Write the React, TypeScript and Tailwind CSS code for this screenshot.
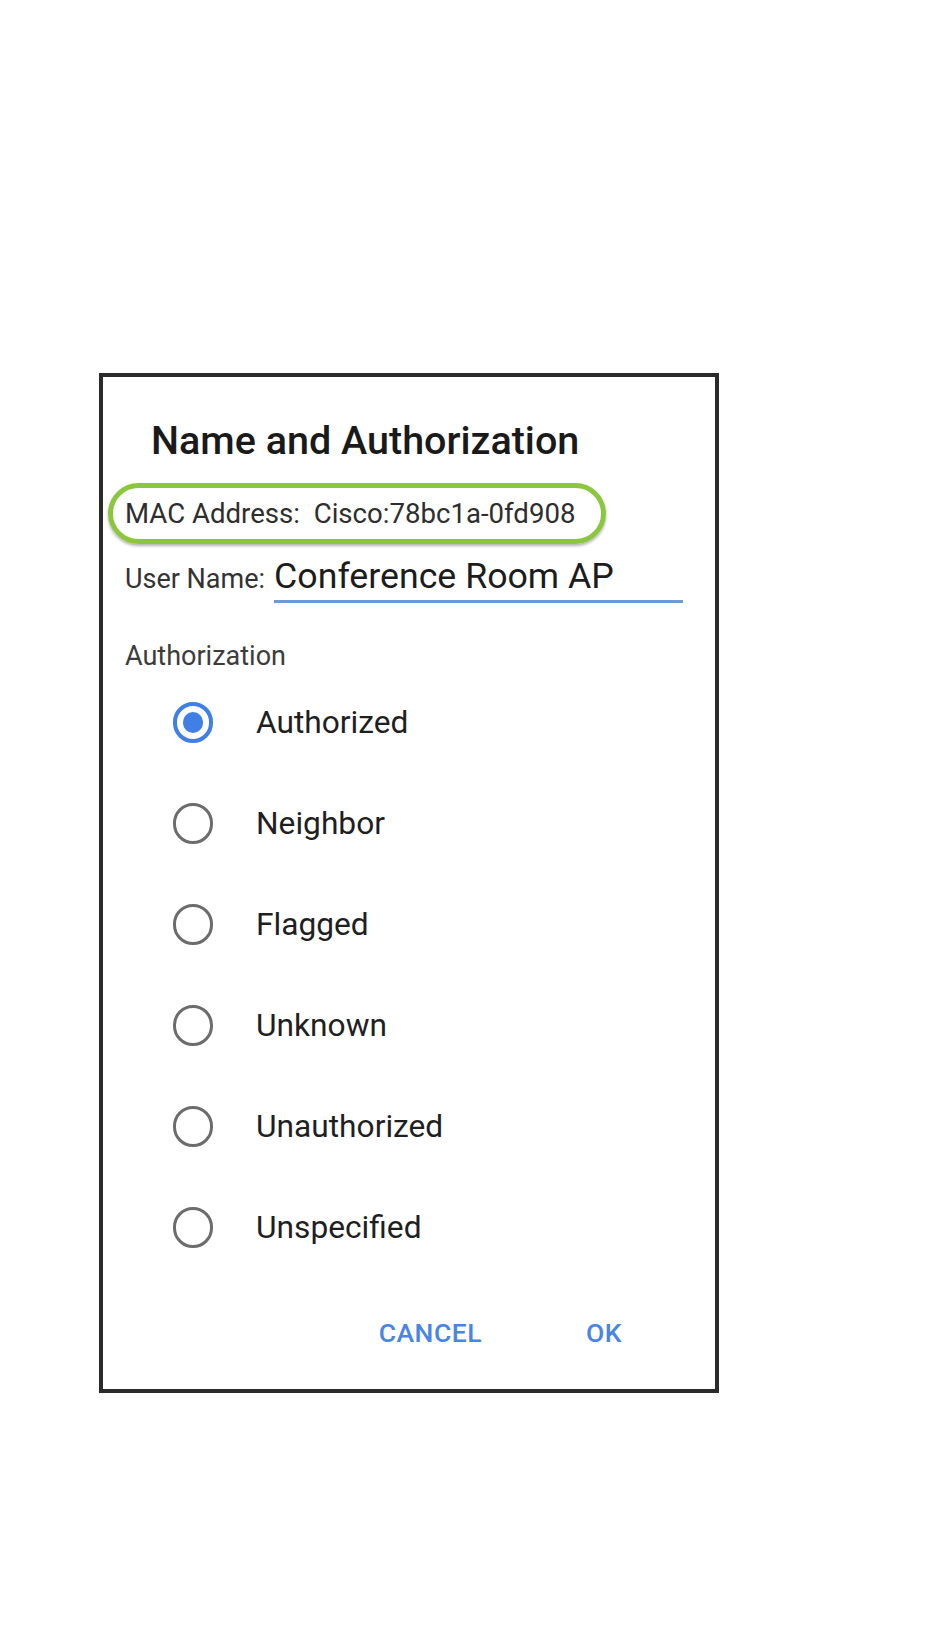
const options = [
  { label: "Authorized", checked: true },
  { label: "Neighbor", checked: false },
  { label: "Flagged", checked: false },
  { label: "Unknown", checked: false },
  { label: "Unauthorized", checked: false },
  { label: "Unspecified", checked: false },
];

const Radio = ({ checked }: { checked: boolean }) =>
  checked ? (
    <div className="w-[40px] h-[41px] rounded-full border-[4px] border-[#3f7fe6] flex items-center justify-center shrink-0">
      <div className="w-[20px] h-[21px] rounded-full bg-[#3f7fe6]"></div>
    </div>
  ) : (
    <div className="w-[40px] h-[41px] rounded-full border-[3px] border-[#6c6c6c] shrink-0"></div>
  );

export default function App() {
  return (
    <div className="w-full min-h-[1642px] bg-white pt-[373px] pl-[99px] font-['Roboto',sans-serif]">
      {/* dialog */}
      <div className="w-[620px] h-[1020px] bg-white border-[4px] border-[#2b2b2b] flex flex-col">
        {/* title */}
        <h1 className="mt-[40px] ml-[48px] text-[39.5px] leading-[48px] font-medium text-[#1a1a1a]">
          Name and Authorization
        </h1>

        {/* mac address */}
        <div className="mt-[18px] ml-[5px] w-[498px] h-[61px] rounded-full border-[5px] border-[#8cc63f] shadow-[0_2px_3px_rgba(0,0,0,0.3)] flex items-center pl-[12px]">
          <p className="text-[27.6px] leading-[32px] text-[#2e2e2e] whitespace-pre">
            MAC Address:  Cisco:78bc1a-0fd908
          </p>
        </div>

        {/* user name */}
        <div className="mt-[12px] ml-[22px] flex items-baseline">
          <span className="text-[27px] leading-[32px] text-[#333]">User Name:</span>
          <div className="ml-[9px] w-[409px] border-b-[3px] border-[#6b9bd6] pb-[4px]">
            <span className="text-[35.7px] leading-[40px] text-[#1c1c1c]">Conference Room AP</span>
          </div>
        </div>

        {/* authorization */}
        <p className="mt-[37px] ml-[22px] text-[27px] leading-[32px] text-[#3c3c3c]">Authorization</p>

        <div className="flex flex-col">
          {options.map((o) => (
            <div key={o.label} className="h-[101px] flex items-center pl-[70px] gap-[43px]">
              <Radio checked={o.checked} />
              <span className="text-[31.7px] leading-[40px] text-[#1f1f1f]">{o.label}</span>
            </div>
          ))}
        </div>

        {/* buttons */}
        <div className="mt-[39px] flex justify-end pr-[93px] gap-[104px]">
          <button className="text-[26.5px] leading-[32px] font-medium tracking-[0.5px] text-[#4a84e4]">CANCEL</button>
          <button className="text-[26.5px] leading-[32px] font-medium tracking-[0.5px] text-[#4a84e4]">OK</button>
        </div>
      </div>
    </div>
  );
}
